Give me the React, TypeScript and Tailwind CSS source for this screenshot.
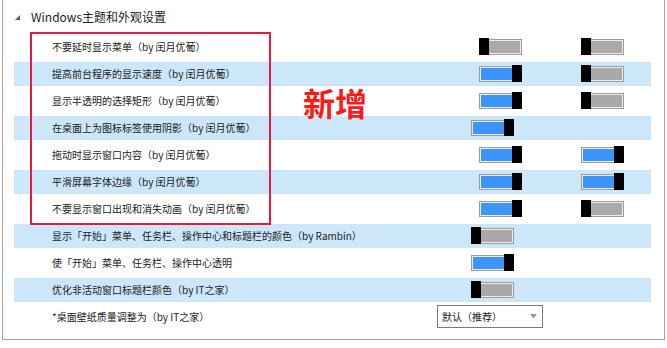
import React from "react";

type Ctrl =
  | { kind: "two"; a: boolean; b: boolean }
  | { kind: "one"; a: boolean }
  | { kind: "select" };

const rows: { text: string; ctrl: Ctrl }[] = [
  { text: "不要延时显示菜单（by 闰月优葡）", ctrl: { kind: "two", a: false, b: false } },
  { text: "提高前台程序的显示速度（by 闰月优葡）", ctrl: { kind: "two", a: true, b: false } },
  { text: "显示半透明的选择矩形（by 闰月优葡）", ctrl: { kind: "two", a: true, b: false } },
  { text: "在桌面上为图标标签使用阴影（by 闰月优葡）", ctrl: { kind: "one", a: true } },
  { text: "拖动时显示窗口内容（by 闰月优葡）", ctrl: { kind: "two", a: true, b: true } },
  { text: "平滑屏幕字体边缘（by 闰月优葡）", ctrl: { kind: "two", a: true, b: true } },
  { text: "不要显示窗口出现和消失动画（by 闰月优葡）", ctrl: { kind: "two", a: true, b: false } },
  { text: "显示「开始」菜单、任务栏、操作中心和标题栏的颜色（by Rambin）", ctrl: { kind: "one", a: false } },
  { text: "使「开始」菜单、任务栏、操作中心透明", ctrl: { kind: "one", a: true } },
  { text: "优化非活动窗口标题栏颜色（by IT之家）", ctrl: { kind: "one", a: false } },
  { text: "*桌面壁纸质量调整为（by IT之家）", ctrl: { kind: "select" } },
];

function Toggle({ on }: { on: boolean }) {
  return (
    <div className="relative w-[43px] h-[17px] shrink-0">
      <div className="absolute inset-x-0 top-[1px] bottom-0 border border-[#9c9c9c] p-[1px] bg-[#ececec]">
        <div className={on ? "h-full w-full bg-[#3b95fb]" : "h-full w-full bg-[#a9a9a9]"} />
      </div>
      <div className={on ? "absolute top-0 bottom-0 right-0 w-[10px] bg-black" : "absolute top-0 bottom-0 left-0 w-[10px] bg-black"} />
    </div>
  );
}

function Controls({ ctrl }: { ctrl: Ctrl }) {
  if (ctrl.kind === "two") {
    return (
      <div className="flex items-center pl-[42px] gap-[59px]">
        <Toggle on={ctrl.a} />
        <Toggle on={ctrl.b} />
      </div>
    );
  }
  if (ctrl.kind === "one") {
    return (
      <div className="flex items-center pl-[34px]">
        <Toggle on={ctrl.a} />
      </div>
    );
  }
  return (
    <div className="flex items-center justify-between w-[106px] h-[23px] border border-[#7a7a7a] bg-white pl-[4px] pr-[5px] text-[10px] leading-none text-[#222]">
      <span>默认（推荐）</span>
      <svg width="7" height="5" viewBox="0 0 7 5">
        <polygon points="0,0 7,0 3.5,4.5" fill="#9a9a9a" />
      </svg>
    </div>
  );
}

export default function App() {
  return (
    <div className="relative w-[667px] h-[348px] bg-white overflow-hidden font-['Noto_Sans_CJK_SC',sans-serif] text-[#222]">
      <div className="ml-[2px] w-[663px] h-[340px] border-l border-r border-b border-[#a3a3a3] flex flex-col">
        <div className="h-[33px] flex items-center pl-[12px]">
          <svg width="5" height="5" viewBox="0 0 5 5" className="mt-[1px]">
            <polygon points="5,0 5,5 0,5" fill="#5c5c5c" />
          </svg>
          <span className="ml-[11px] text-[12px] leading-none">Windows主题和外观设置</span>
        </div>
        <div className="flex flex-col pl-[11px]">
          {rows.map((r, i) => (
            <div key={i} className="h-[27px] flex items-center">
              <div className={i % 2 === 1 ? "h-[24px] w-[637px] flex items-center bg-[#cce7f9]" : "h-[24px] w-[637px] flex items-center"}>
                <div className="w-[423px] shrink-0 pl-[38px] text-[10px] leading-none whitespace-nowrap">{r.text}</div>
                <Controls ctrl={r.ctrl} />
              </div>
            </div>
          ))}
        </div>
      </div>
      <div className="absolute left-[30px] top-[32px] w-[241px] h-[193px] border-2 border-[#e6193f]" />
      <div className="absolute left-[303px] top-[86px] text-[32px] font-bold leading-none text-[#fa1a1a]">新增</div>
    </div>
  );
}
